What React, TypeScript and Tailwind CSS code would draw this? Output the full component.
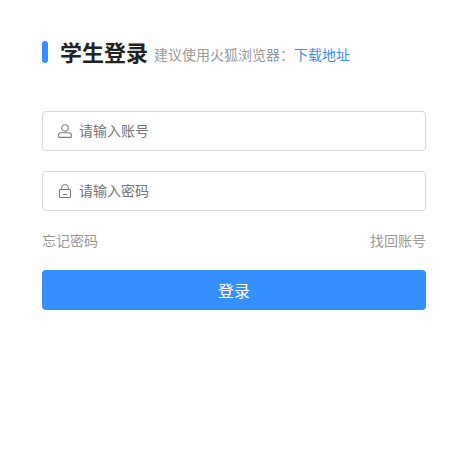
import type { ReactNode } from "react";

interface FieldProps {
  type: "text" | "password";
  placeholder: string;
  icon: ReactNode;
}

function UserIcon() {
  return (
    <svg width="14" height="14" viewBox="0 0 14 14" fill="none" stroke="#808080" strokeWidth="1.1" aria-hidden="true">
      <circle cx="7" cy="3.9" r="3.2" />
      <path d="M3.2 8.7h7.6q2.6 0 2.6 2.6v1.1q0 1-1 1H1.6q-1 0-1-1v-1.1q0-2.6 2.6-2.6z" />
    </svg>
  );
}

function LockIcon() {
  return (
    <svg width="14" height="14" viewBox="0 0 14 14" fill="none" stroke="#757575" aria-hidden="true">
      <rect x="1.5" y="5.5" width="11" height="8" rx="0.5" />
      <path d="M3.7 5.5V3.8a3.3 3.3 0 0 1 6.6 0v1.7M5 10.5h4" />
    </svg>
  );
}

function Field({ type, placeholder, icon }: FieldProps) {
  return (
    <label className="flex h-10 items-center gap-[7px] rounded border border-[#d9d9d9] px-[15px]">
      {icon}
      <input
        type={type}
        placeholder={placeholder}
        className="min-w-0 flex-1 pb-0.5 text-sm outline-none placeholder:text-[#757575]"
      />
    </label>
  );
}

export default function App() {
  return (
    <main className="min-h-screen bg-white pt-9 pr-[43px] pl-[42px] font-['Noto_Sans_CJK_SC',sans-serif] text-sm text-[#999]">
      <header className="flex h-8 items-center">
        <span className="h-[22px] w-1.5 rounded-full bg-[#348fff]" />
        <h1 className="ml-3 text-[22px] font-bold text-[#222]">学生登录</h1>
        <p className="mt-1 ml-1.5 whitespace-nowrap">
          建议使用火狐浏览器：
          <a href="#" className="text-[#348fff]">下载地址</a>
        </p>
      </header>
      <form className="mt-[43px]">
        <div className="flex flex-col gap-5">
          <Field type="text" placeholder="请输入账号" icon={<UserIcon />} />
          <Field type="password" placeholder="请输入密码" icon={<LockIcon />} />
        </div>
        <div className="mt-[19px] flex h-5 items-center justify-between">
          <a href="#">忘记密码</a>
          <a href="#">找回账号</a>
        </div>
        <button type="button" className="mt-5 h-10 w-full rounded bg-[#348fff] text-base text-white">
          登录
        </button>
      </form>
    </main>
  );
}
